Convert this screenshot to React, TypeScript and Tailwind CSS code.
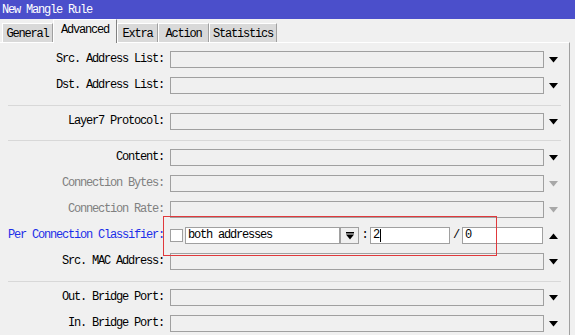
import React from "react";

const FONT = { fontFamily: '"Liberation Mono", "DejaVu Sans Mono", monospace' };

function Arrow({ dir = "down", gray = false }: { dir?: "down" | "up"; gray?: boolean }) {
  const fill = gray ? "#a8a8a8" : "#000000";
  return (
    <svg width="9" height="6" viewBox="0 0 9 6" className="block">
      {dir === "down" ? (
        <polygon points="0,0 9,0 4.5,5.5" fill={fill} />
      ) : (
        <polygon points="0,6 9,6 4.5,0.5" fill={fill} />
      )}
    </svg>
  );
}

function Row({
  label,
  color = "text-black",
  dir = "down",
  gray = false,
  children,
}: {
  label: string;
  color?: string;
  dir?: "down" | "up";
  gray?: boolean;
  children?: React.ReactNode;
}) {
  return (
    <div className="flex h-[26px] items-start pt-[4px]">
      <div className={`w-[164px] shrink-0 text-right leading-[17px] ${color}`}>{label}</div>
      <div className="ml-[6px] w-[374px] shrink-0">
        {children ?? <div className="h-[17px] border border-[#a0a0a0] bg-[#f0f0f0]" />}
      </div>
      <div className="flex w-[18px] shrink-0 justify-center pt-[6px]">
        <Arrow dir={dir} gray={gray} />
      </div>
    </div>
  );
}

function Sep({ offset }: { offset: string }) {
  return (
    <div className={`h-[10px] ${offset}`}>
      <div className="ml-[8px] h-px w-[553px] bg-[#d8d8d8]" />
    </div>
  );
}

function Tab({ label, w, active = false }: { label: string; w: string; active?: boolean }) {
  if (active) {
    return (
      <div
        className={`${w} relative z-10 flex h-[24px] items-start justify-center border-l border-t border-r border-l-white border-t-white border-r-[#808080] bg-[#f0f0f0] pt-[3px] leading-[15px]`}
      >
        {label}
      </div>
    );
  }
  return (
    <div
      className={`${w} mt-[4px] flex h-[19px] items-start justify-center border-l border-t border-r border-l-white border-t-white border-r-[#a0a0a0] bg-[#d9d9d9] pt-[3px] leading-[15px]`}
    >
      {label}
    </div>
  );
}

export default function App() {
  return (
    <div
      className="relative h-[335px] w-[575px] overflow-hidden bg-[#f0f0f0] text-[12px] tracking-[-1.2px] text-black"
      style={FONT}
    >
      <div className="flex h-[19px] items-center bg-[#4b4fcb] pl-[2px] text-white">New Mangle Rule</div>
      <div className="flex h-[23px] items-start pl-[2px]">
        <Tab label="General" w="w-[51px]" />
        <Tab label="Advanced" w="w-[64px]" active />
        <Tab label="Extra" w="w-[41px]" />
        <Tab label="Action" w="w-[51px]" />
        <Tab label="Statistics" w="w-[68px]" />
      </div>
      <div className="h-[293px] w-[570px] border-r border-t border-r-[#a0a0a0] border-t-white pt-[4px]">
        <Row label="Src. Address List:" />
        <Row label="Dst. Address List:" />
        <Sep offset="pt-[6px]" />
        <Row label="Layer7 Protocol:" />
        <Sep offset="pt-[5px]" />
        <Row label="Content:" />
        <Row label="Connection Bytes:" color="text-[#808080]" gray />
        <Row label="Connection Rate:" color="text-[#808080]" gray />
        <Row label="Per Connection Classifier:" color="text-[#1c2ee8]" dir="up">
          <div className="flex h-[17px] items-start">
            <div className="mt-[2px] h-[13px] w-[13px] shrink-0 border border-[#a0a0a0] bg-white" />
            <div className="ml-[2px] h-[17px] w-[155px] shrink-0 border border-[#a0a0a0] bg-white pl-[2px] leading-[15px]">
              both addresses
            </div>
            <div className="flex h-[17px] w-[19px] shrink-0 items-center justify-center border border-[#a0a0a0] bg-[#f0f0f0]">
              <svg width="8" height="8" viewBox="0 0 8 8" className="block">
                <rect x="0" y="0" width="8" height="1.5" fill="#000" />
                <polygon points="0,2.5 8,2.5 4,7.5" fill="#000" />
              </svg>
            </div>
            <div className="w-[11px] shrink-0 text-center leading-[17px]">:</div>
            <div className="flex h-[17px] w-[80px] shrink-0 items-center border border-[#a0a0a0] bg-white pl-[2px] leading-[15px]">
              <span>2</span>
              <span className="ml-[1px] inline-block h-[13px] w-px bg-black" />
            </div>
            <div className="w-[12px] shrink-0 text-center leading-[17px]">/</div>
            <div className="h-[17px] w-[81px] shrink-0 border border-[#a0a0a0] bg-white pl-[2px] leading-[15px]">0</div>
          </div>
        </Row>
        <Row label="Src. MAC Address:" />
        <Sep offset="pt-[6px]" />
        <Row label="Out. Bridge Port:" />
        <Row label="In. Bridge Port:" />
      </div>
      <div className="pointer-events-none absolute left-[163px] top-[216px] h-[40px] w-[334px] border border-[#e0393c]" />
    </div>
  );
}
